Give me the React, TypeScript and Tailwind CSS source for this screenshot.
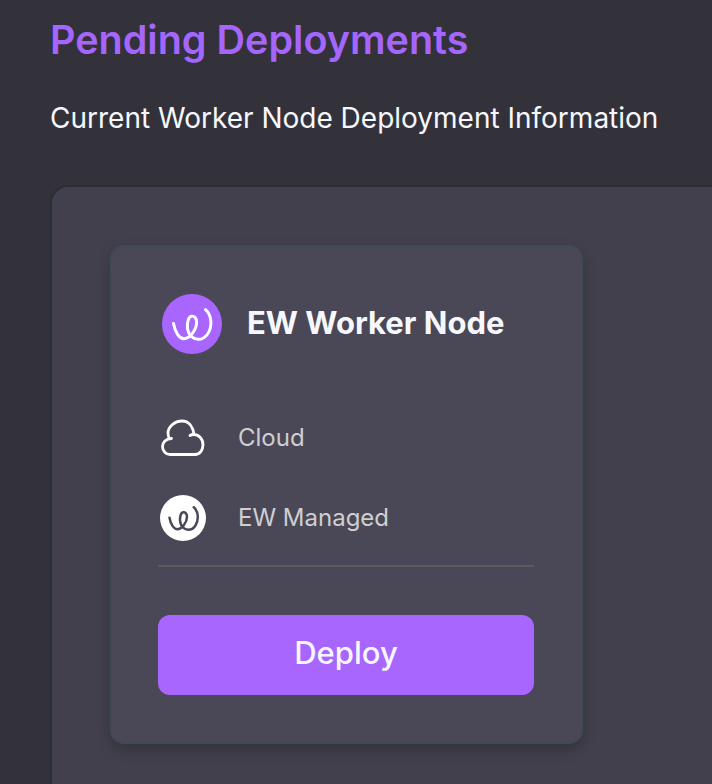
import React from "react";

function Swirl({ color, width }: { color: string; width: number }) {
  return (
    <svg viewBox="90 85 132 100" className="w-full h-full" fill="none" stroke={color} strokeWidth={width} strokeLinecap="round" strokeLinejoin="round">
      <path d="M100 132C105 160 118 178 132 178C150 178 170 150 170 128C170 115 162 108 154 110C145 112 140 130 143 150C146 168 160 180 175 180C198 180 215 155 213 125C212 110 205 97 197 90" />
    </svg>
  );
}

function Row({ icon, label }: { icon: React.ReactNode; label: string }) {
  return (
    <div className="flex items-center h-[48px]">
      <div className="w-[80px] pl-[2px] flex items-center">{icon}</div>
      <span className="text-[24px] leading-[32px] text-[#cfced3]">{label}</span>
    </div>
  );
}

export default function App() {
  return (
    <div className="w-[712px] h-[784px] overflow-hidden bg-[#33323b] pl-[50px] font-['Inter',sans-serif]">
      <h1 className="pt-[14px] h-[52px] text-[39.5px] leading-[52px] font-semibold text-[#a566ff]">Pending Deployments</h1>
      <p className="mt-[48px] text-[28px] leading-[36px] text-[#f7f8ff]">Current Worker Node Deployment Information</p>
      <div className="mt-[49px] w-[800px] h-[700px] rounded-tl-[18px] border-l-2 border-t-2 border-[#282f37] bg-[#42404c] pl-[58px] pt-[58px]">
        <div className="w-[473px] h-[499px] rounded-[14px] border-2 border-[#414a54] bg-[#4a4856] shadow-[0_6px_14px_rgba(0,0,0,0.22)] pl-[46px] pr-[47px] pt-[46px]">
          <div className="flex items-center h-[62px]">
            <div className="ml-[4px] w-[60px] h-[60px] rounded-full bg-[#a866ff] flex items-center justify-center">
              <div className="w-[44px] h-[33px]"><Swirl color="#ffffff" width={9} /></div>
            </div>
            <span className="ml-[25px] pb-[2px] text-[31px] leading-[40px] font-bold text-[#f7f8ff]">EW Worker Node</span>
          </div>
          <div className="mt-[59px]">
            <Row
              label="Cloud"
              icon={
                <svg viewBox="0 0 54 44" className="w-[54px] h-[44px] -ml-[5px] -mr-[5px] shrink-0" fill="none" stroke="#ffffff" strokeWidth={2.8} strokeLinecap="round" strokeLinejoin="round">
                  <path d="M15 38.5H40C45 38.5 48 34 48 28.5C48 23 44 18.5 38.5 18.5C37.5 18.5 36 18.8 35 19.5M39 18.5C38 11 34 5 27 5C19.5 5 13 11 13 17C13 19 13.5 21 14.5 22.5M16.5 22.5C11 22.5 7.5 26.5 7.5 30.5C7.5 35 11 38.5 15 38.5" />
                </svg>
              }
            />
          </div>
          <div className="mt-[32px]">
            <Row
              label="EW Managed"
              icon={
                <div className="w-[46px] h-[46px] rounded-full bg-white flex items-center justify-center">
                  <div className="w-[33px] h-[25px]"><Swirl color="#4a4856" width={10} /></div>
                </div>
              }
            />
          </div>
          <div className="mt-[23px] h-[2px] bg-[#5c5b60]" />
          <button className="mt-[48px] w-full h-[80px] pb-[4px] rounded-[12px] bg-[#a866ff] text-[31px] text-[#f7f8ff] font-medium">Deploy</button>
        </div>
      </div>
    </div>
  );
}
